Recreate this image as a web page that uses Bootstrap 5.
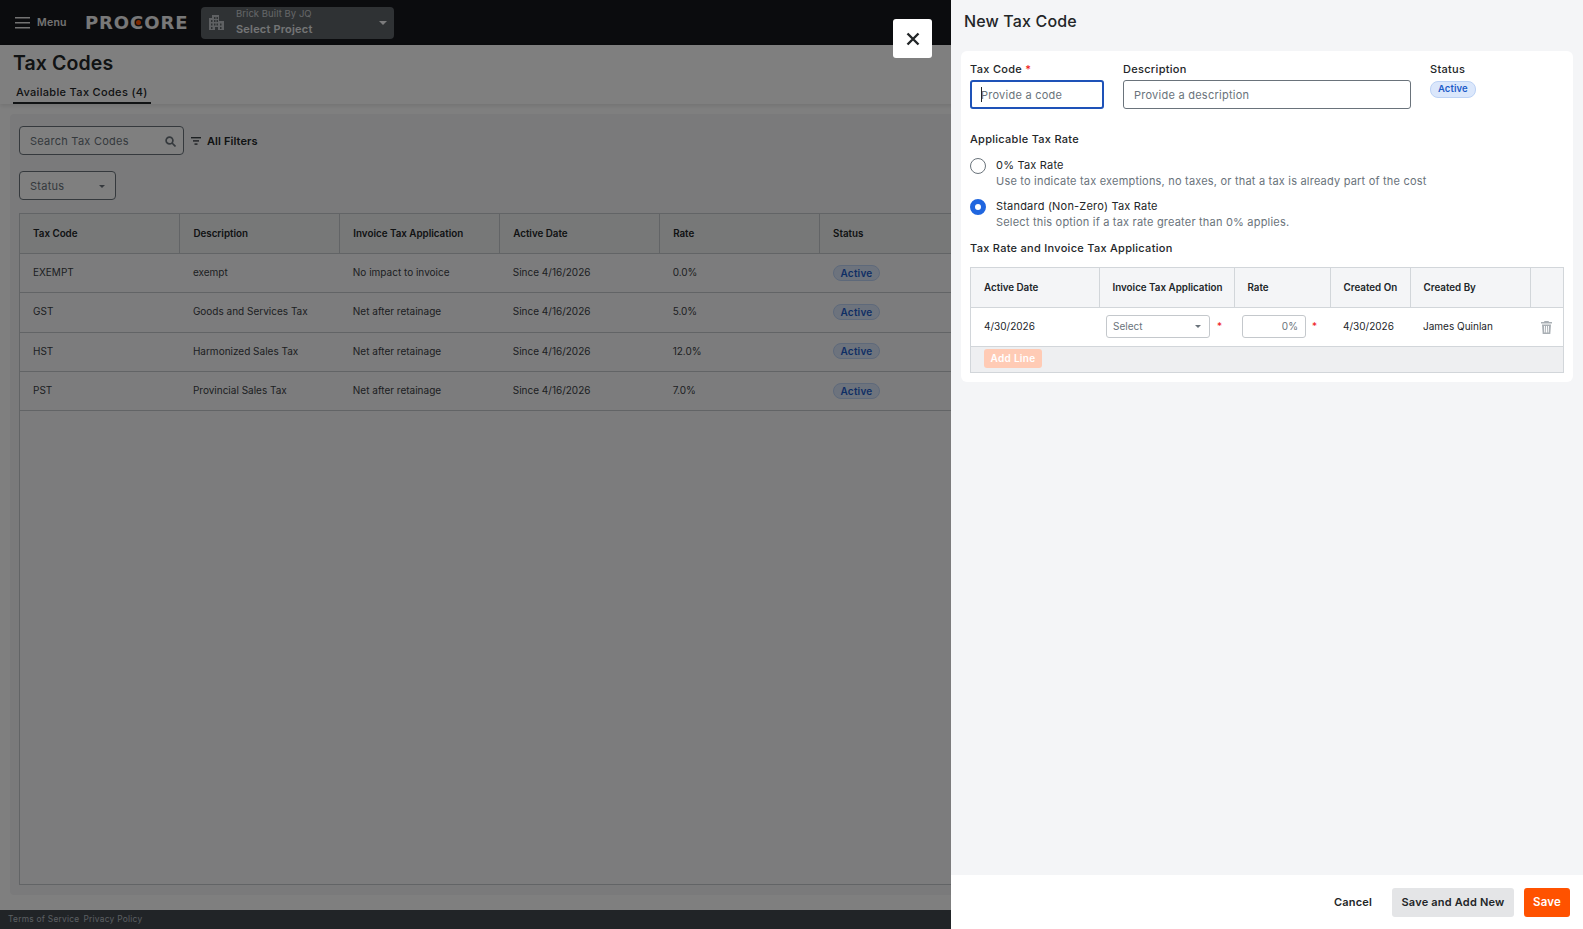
<!DOCTYPE html>
<html lang="en">
<head>
    <meta charset="UTF-8">
    <meta name="viewport" content="width=device-width, initial-scale=1.0">
    <title>New Tax Code</title>
    <link rel="stylesheet" href="https://cdn.jsdelivr.net/npm/bootstrap@5.3.0/dist/css/bootstrap.min.css">
    <style>
        html, body { height: 929px; overflow: hidden; }
        body { font-family: Inter, "Liberation Sans", sans-serif; font-size: 11px; letter-spacing: .25px; color: #232628; background: #fff; }
        .app { height: 929px; width: 1583px; position: relative; overflow: hidden; }
        .scrim { position: absolute; inset: 0; background: rgba(0,0,0,.5); }

        .topbar { height: 45px; background: #16181c; color: #fff; padding-left: 15px; }
        .menu-txt { font-weight: 600; font-size: 10.5px; margin-left: 7px; width: 48px; color: #e6e6e6; }
        .logo { font-family: "DejaVu Sans", sans-serif; font-weight: 700; font-size: 18px; letter-spacing: .9px; color: #f0f0f0; width: 116px; line-height: 1; }
        .logo-c { position: relative; display: inline-block; }
        .logo-c::after { content: ""; position: absolute; left: 6px; top: 6.5px; width: 5px; height: 5px; border-radius: 50%; background: #ff5200; }
        .proj { width: 193px; height: 32px; background: #5e6468; border-radius: 4px; padding: 0 7px 0 8px; }
        .proj-a { font-size: 9.5px; color: #c9cdd0; font-weight: 400; line-height: 14px; letter-spacing: .05px; }
        .proj-b { font-size: 11px; font-weight: 600; color: #e8eaec; line-height: 16px; letter-spacing: .2px; }
        .proj-txt { margin-left: 12px; padding-bottom: 2px; }
        .caret-d { width: 0; height: 0; border-left: 3.5px solid transparent; border-right: 3.5px solid transparent; border-top: 3.5px solid currentColor; }
        .proj .caret-d { border-width: 4px 4px 0; }

        .head { height: 59px; padding-left: 13px; box-shadow: 0 2px 4px rgba(0,0,0,.1); position: relative; }
        .head h1 { font-size: 19.5px; font-weight: 600; margin: 0; padding-top: 6px; line-height: 24px; letter-spacing: .1px; color: #232628; }
        .tab-on { display: inline-block; margin-top: 9px; padding: 0 3px 2px 3px; font-size: 11px; font-weight: 500; line-height: 16px; border-bottom: 2px solid #232628; letter-spacing: .33px; }

        .main-card { margin: 10px 0 0 10px; width: 1563px; height: 781px; background: #f4f5f7; border-radius: 4px; padding: 12px 9px 10px; }
        .search-box { width: 165px; height: 29px; border: 1px solid #6a737b; border-radius: 4px; background: #fff; padding: 1px 7px 0 10px; color: #6a737b; }
        .filter-ic { margin-left: 7px; }
        .filters { font-weight: 600; color: #232628; margin-left: 6px; font-size: 11px; letter-spacing: .1px; padding-top: 1px; }
        .status-sel { width: 97px; height: 29px; margin-top: 16px; border: 1px solid #6a737b; border-radius: 4px; padding: 1px 10px 0 10px; color: #6a737b; background: #fff; }

        .list-wrap { margin-top: 13px; width: 1546px; height: 672px; border: 1px solid #c4c8cc; background: #f8f9fa; }
        .tax-tbl { table-layout: fixed; width: 960px; margin: 0; font-size: 10px; letter-spacing: 0; color: #3b4045; --bs-table-bg: transparent; }
        .tax-tbl th { height: 39.5px; padding: 1px 13px 0; font-size: 9.8px; font-weight: 600; vertical-align: middle; background: #eef0f1; border-bottom: 1px solid #c4c8cc; border-right: 1px solid #c4c8cc; color: #232628; }
        .tax-tbl td { height: 39.33px; padding: 0 13px 1px; vertical-align: middle; border-bottom: 1px solid #c4c8cc; background: #f8f9fa; }
        .pill { display: inline-block; font-size: 10px; font-weight: 600; line-height: 14px; padding: 0 7px; border-radius: 8px; height: 16px; background: #dbe7fb; color: #1d5cc9; border: 1px solid #bcd2f5; letter-spacing: .2px; }

        .foot-links { position: absolute; left: 0; right: 0; bottom: 0; height: 19px; background: #42494f; padding-left: 8px; font-size: 8.4px; color: #b8bec3; line-height: 19px; letter-spacing: .25px; }
        .foot-links span { margin-right: 4px; }

        .close-x { position: absolute; left: 893px; top: 19px; width: 39px; height: 39px; background: #fff; border-radius: 3px; }
        .panel { position: absolute; left: 951px; top: 0; width: 632px; height: 929px; background: #f4f5f7; }
        .panel-title { height: 51px; padding: 13px 0 0 13px; font-size: 16px; font-weight: 500; line-height: 17px; letter-spacing: .15px; }
        .form-card { margin: 0 10px; width: 612px; background: #fff; border-radius: 6px; padding: 10px 10px 10px 9px; height: 331px; }
        .fld-code { margin-right: 19px; }
        .fld-desc { margin-right: 19px; }
        .fld-lbl { font-weight: 500; font-size: 11px; line-height: 16px; margin-bottom: 3px; letter-spacing: .3px; }
        .req { color: #e11; }
        .inp { height: 29px; font-size: 11px; border: 1px solid #6a737b; border-radius: 3px; padding: 0 10px; letter-spacing: .25px; font-family: inherit; }
        .inp::placeholder { color: #6a737b; opacity: 1; }
        .inp:focus { box-shadow: none; }
        .inp-on { border: 2px solid #1e52b8; padding-left: 9px; }
        .fake-caret { position: absolute; left: 11px; top: 7px; width: 1px; height: 15px; background: #232628; }
        .pill-s { height: 17px; font-size: 9.5px; padding: 0 7px; letter-spacing: .1px; }
        .sect-lbl { font-weight: 500; font-size: 11px; line-height: 16px; letter-spacing: .28px; }
        .sect-first { margin-top: 22px; }
        .sect-second { margin-top: 10px; }
        .radio-first { margin-top: 10px; }
        .radio-second { margin-top: 9px; }
        .radio-row { padding: 0; min-height: 0; gap: 10px; }
        .radio-row .form-check-input { margin: 1px 0 0; width: 16px; height: 16px; flex: none; border: 1px solid #6a737b; float: none; }
        .radio-row .form-check-input:checked { background: #fff; border: 5px solid #2066df; }
        .radio-t { font-size: 11px; line-height: 16px; letter-spacing: .2px; }
        .radio-d { font-size: 11px; line-height: 16px; color: #6a737b; letter-spacing: .2px; }

        .line-wrap { margin-top: 11px; width: 594px; border: 1px solid #d2d6da; }
        .line-tbl { table-layout: fixed; width: 592px; margin: 0; font-size: 10px; letter-spacing: 0; --bs-table-bg: transparent; }
        .line-tbl th { height: 39.5px; padding: 1px 13px 0; font-size: 9.8px; font-weight: 600; white-space: nowrap; vertical-align: middle; background: #f4f5f7; border-right: 1px solid #d2d6da; border-bottom: 1px solid #d2d6da; }
        .line-tbl th:last-child { border-right: 0; }
        .line-tbl td { height: 39px; padding: 0 13px 2px; vertical-align: middle; border-bottom: 1px solid #d2d6da; background: #fff; }
        .line-tbl td.cell-pick { padding: 0 7px 1px; }
        .pick { width: 104px; height: 23px; border: 1px solid #c4c8cc; border-radius: 3px; padding: 0 8px 0 6px; color: #6a737b; }
        .rate-in { width: 64px; height: 23px; margin-left: 1px; border: 1px solid #c4c8cc; border-radius: 3px; padding: 0 7px; color: #6a737b; text-align: right; line-height: 21px; }
        .req-a { margin-left: 7px; }
        .req-b { margin-left: 6px; }
        .add-row { height: 25px; background: #eeeff1; padding: 2px 13px 0; }
        .add-btn { width: 58px; height: 19px; background: #ffcbb5; color: #fff; font-weight: 600; font-size: 10px; border-radius: 3px; text-align: center; line-height: 18px; letter-spacing: .3px; }

        .panel-foot { position: absolute; left: 0; right: 0; bottom: 0; height: 54px; background: #fff; padding-right: 13px; gap: 10px; }
        .btn-plain, .btn-grey, .btn-save { height: 29px; padding: 0; font-size: 11px; font-weight: 600; border-radius: 3px; line-height: 29px; border: 0; letter-spacing: .2px; }
        .btn-plain { width: 58px; background: none; color: #232628; text-align: center; }
        .btn-grey { width: 122px; background: #e4e5e7; color: #232628; }
        .btn-save { width: 46px; background: #ff5200; color: #fff; font-size: 11.5px; }
    </style>
</head>
<body>
<div class="app">
    <div class="topbar d-flex align-items-center">
        <svg width="15" height="12" viewBox="0 0 15 12" fill="#e6e6e6"><rect y="0" width="15" height="1.5"/><rect y="5" width="15" height="1.5"/><rect y="10" width="15" height="1.5"/></svg>
        <span class="menu-txt">Menu</span>
        <span class="logo">PRO<span class="logo-c">C</span>ORE</span>
        <div class="proj d-flex align-items-center">
            <svg width="15" height="15" viewBox="0 0 15 15" fill="#bfc3c6"><path d="M0 3h3V0h7v6h5v9H9v-3H6v3H0zM2 5v2h1.500V5zM5 5v2h1.500V5zM7.500 5v2H9V5zM5 2v2h1.500V2zM7.500 2v2H9V2zM2 8.500v2h1.500v-2zM5 8.500v2h1.500v-2zM7.500 8.500v2H9v-2zM11 8.500v2h1.500v-2zM2 12v2h1.500v-2zM11 12v2h1.500v-2z" fill-rule="evenodd"/></svg>
            <div class="proj-txt flex-grow-1">
                <div class="proj-a">Brick Built By JQ</div>
                <div class="proj-b">Select Project</div>
            </div>
            <span class="caret-d text-light"></span>
        </div>
    </div>

    <div class="head">
        <h1>Tax Codes</h1>
        <span class="tab-on">Available Tax Codes (4)</span>
    </div>

    <div class="main-card">
        <div class="d-flex align-items-center">
            <div class="search-box d-flex align-items-center justify-content-between">
                <span>Search Tax Codes</span>
                <svg width="11" height="11" viewBox="0 0 11 11" fill="none" stroke="#6a737b" stroke-width="1.700"><circle cx="4.500" cy="4.500" r="3.400"/><path d="M7 7l3.500 3.500"/></svg>
            </div>
            <svg class="filter-ic" width="10" height="8" viewBox="0 0 10 8" fill="#3b4045"><rect width="10" height="1.400"/><rect x="2" y="3.200" width="6" height="1.400"/><rect x="3.500" y="6.400" width="3" height="1.400"/></svg>
            <span class="filters">All Filters</span>
        </div>
        <div class="status-sel d-flex align-items-center justify-content-between">
            <span>Status</span><span class="caret-d"></span>
        </div>
        <div class="list-wrap">
            <table class="table tax-tbl">
                <thead>
                    <tr><th>Tax Code</th><th>Description</th><th>Invoice Tax Application</th><th>Active Date</th><th>Rate</th><th>Status</th></tr>
                </thead>
                <tbody>
                    <tr><td>EXEMPT</td><td>exempt</td><td>No impact to invoice</td><td>Since 4/16/2026</td><td>0.0%</td><td><span class="pill">Active</span></td></tr>
                    <tr><td>GST</td><td>Goods and Services Tax</td><td>Net after retainage</td><td>Since 4/16/2026</td><td>5.0%</td><td><span class="pill">Active</span></td></tr>
                    <tr><td>HST</td><td>Harmonized Sales Tax</td><td>Net after retainage</td><td>Since 4/16/2026</td><td>12.0%</td><td><span class="pill">Active</span></td></tr>
                    <tr><td>PST</td><td>Provincial Sales Tax</td><td>Net after retainage</td><td>Since 4/16/2026</td><td>7.0%</td><td><span class="pill">Active</span></td></tr>
                </tbody>
            </table>
        </div>
    </div>

    <div class="foot-links"><span>Terms of Service</span><span>Privacy Policy</span></div>

    <div class="scrim"></div>

    <div class="close-x d-flex align-items-center justify-content-center">
        <svg width="14" height="14" viewBox="0 0 14 14" stroke="#232628" stroke-width="2.400" fill="none"><path d="M1.500 1.500l11 11M12.500 1.500l-11 11"/></svg>
    </div>

    <div class="panel">
        <div class="panel-title">New Tax Code</div>
        <div class="form-card">
            <div class="d-flex">
                <div class="fld-code">
                    <div class="fld-lbl">Tax Code <span class="req">*</span></div>
                    <div class="position-relative">
                        <input class="form-control inp inp-on" style="width:134px" placeholder="Provide a code">
                        <span class="fake-caret"></span>
                    </div>
                </div>
                <div class="fld-desc">
                    <div class="fld-lbl">Description</div>
                    <input class="form-control inp" style="width:288px" placeholder="Provide a description">
                </div>
                <div>
                    <div class="fld-lbl">Status</div>
                    <span class="pill pill-s">Active</span>
                </div>
            </div>
            <div class="sect-lbl sect-first">Applicable Tax Rate</div>
            <label class="form-check radio-row d-flex radio-first">
                <input class="form-check-input" type="radio" name="rate">
                <span><span class="radio-t d-block">0% Tax Rate</span><span class="radio-d d-block">Use to indicate tax exemptions, no taxes, or that a tax is already part of the cost</span></span>
            </label>
            <label class="form-check radio-row d-flex radio-second">
                <input class="form-check-input" type="radio" name="rate" checked>
                <span><span class="radio-t d-block">Standard (Non-Zero) Tax Rate</span><span class="radio-d d-block">Select this option if a tax rate greater than 0% applies.</span></span>
            </label>
            <div class="sect-lbl sect-second">Tax Rate and Invoice Tax Application</div>
            <div class="line-wrap">
                <table class="table line-tbl">
                    <thead>
                        <tr>
                            <th style="width:128px">Active Date</th>
                            <th style="width:135px">Invoice Tax Application</th>
                            <th style="width:96px">Rate</th>
                            <th style="width:80px">Created On</th>
                            <th style="width:120px">Created By</th>
                            <th></th>
                        </tr>
                    </thead>
                    <tbody>
                        <tr>
                            <td>4/30/2026</td>
                            <td class="cell-pick">
                                <div class="d-flex align-items-center">
                                    <div class="pick d-flex align-items-center justify-content-between"><span>Select</span><span class="caret-d"></span></div>
                                    <span class="req req-a">*</span>
                                </div>
                            </td>
                            <td class="cell-pick">
                                <div class="d-flex align-items-center">
                                    <div class="rate-in">0%</div>
                                    <span class="req req-b">*</span>
                                </div>
                            </td>
                            <td>4/30/2026</td>
                            <td>James Quinlan</td>
                            <td class="cell-pick text-center">
                                <svg width="11" height="13" viewBox="0 0 11 13" fill="#a9afb4"><path d="M3.500 0h4l.5 1h3v1.500H0V1h3zM1 3.500h9l-.7 9.500H1.700zM3 5l.3 6.500h1L4 5zM5 5v6.500h1V5zM7 5l-.3 6.500h1L8 5z" fill-rule="evenodd"/></svg>
                            </td>
                        </tr>
                    </tbody>
                </table>
                <div class="add-row"><div class="add-btn">Add Line</div></div>
            </div>
        </div>
        <div class="panel-foot d-flex align-items-center justify-content-end">
            <button class="btn-plain">Cancel</button>
            <button class="btn-grey">Save and Add New</button>
            <button class="btn-save">Save</button>
        </div>
    </div>
</div>
<script src="https://cdn.jsdelivr.net/npm/bootstrap@5.3.0/dist/js/bootstrap.bundle.min.js"></script>
</body>
</html>
